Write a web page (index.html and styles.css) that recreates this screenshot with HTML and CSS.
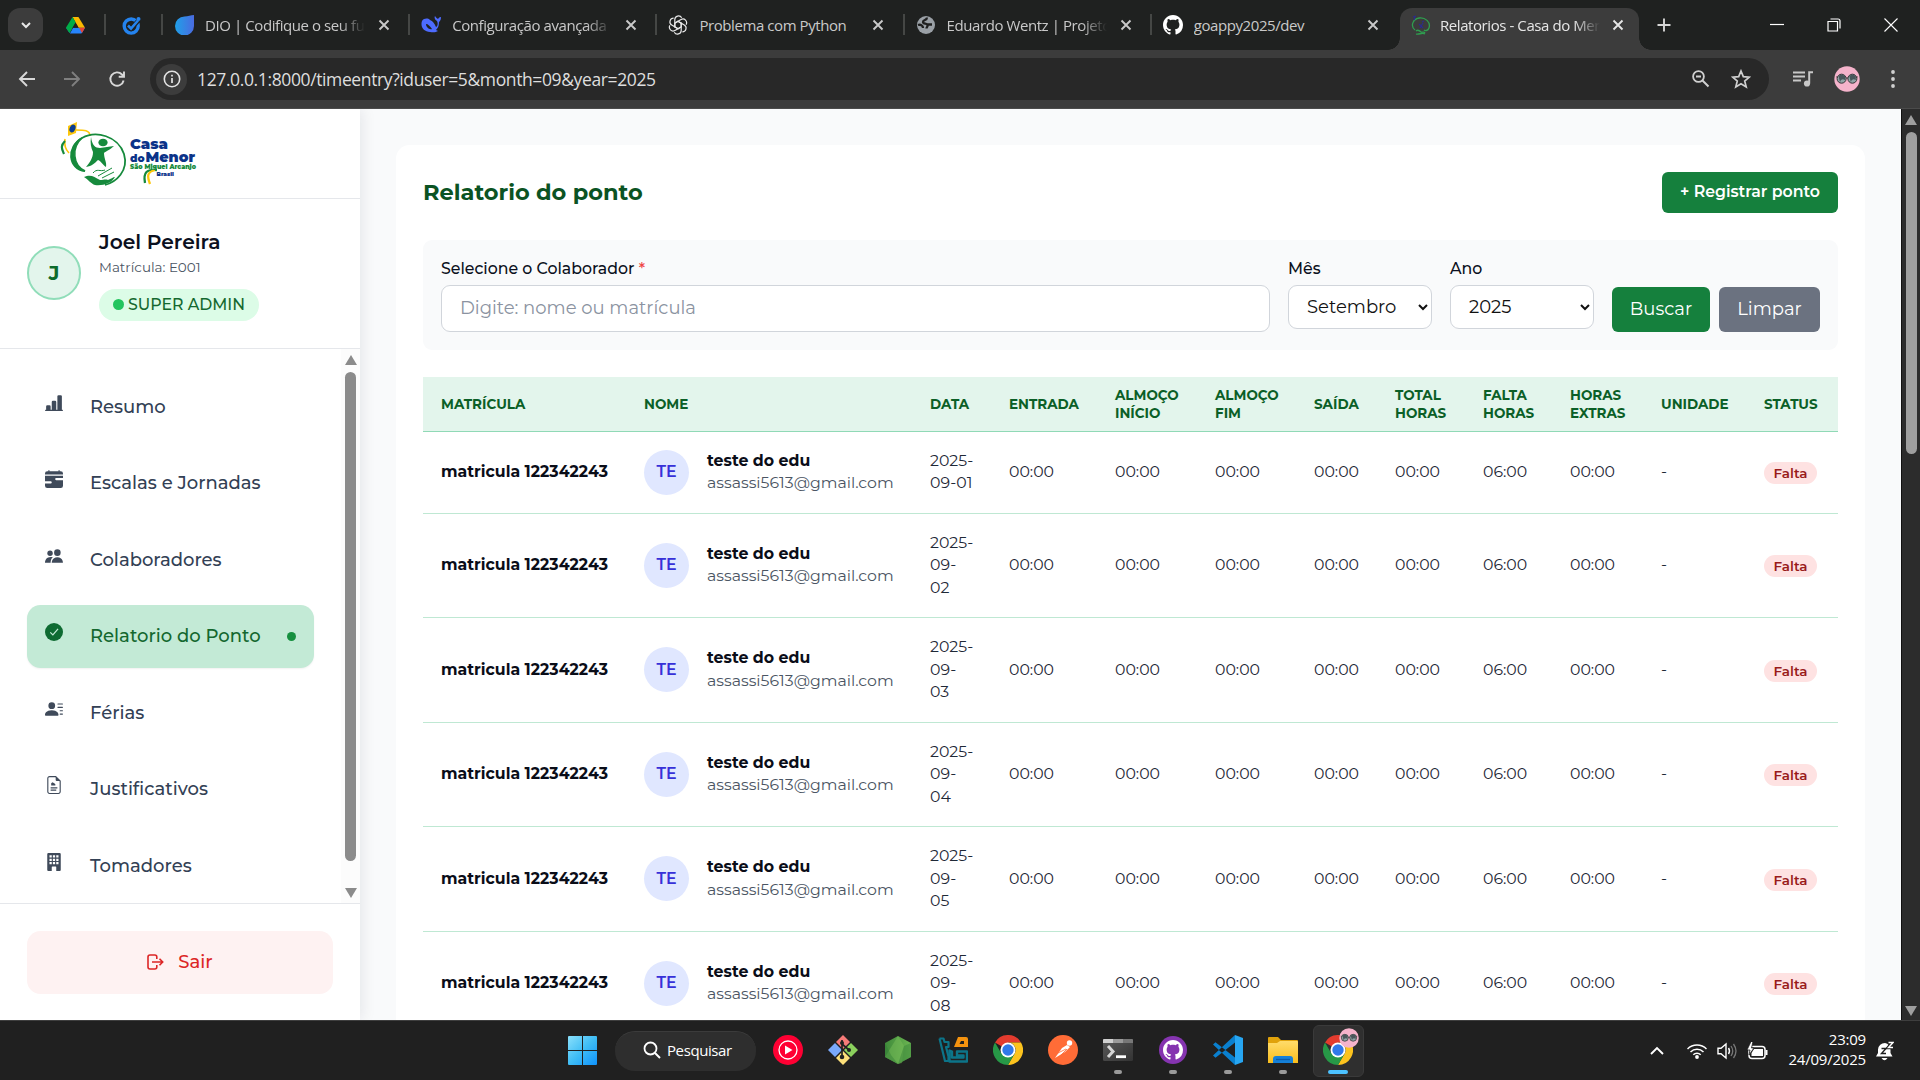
FILE: index.html
```html
<!DOCTYPE html>
<html lang="pt-BR">
<head>
<meta charset="utf-8">
<title>Relatorios - Casa do Menor</title>
<link rel="stylesheet" href="styles.css">
</head>
<body>
<svg class="defs" width="0" height="0" aria-hidden="true">
  <defs>
    <linearGradient id="gDio" x1="0" x2="1"><stop offset="0" stop-color="#1fa0e8"/><stop offset="1" stop-color="#4a6be0"/></linearGradient>
    <linearGradient id="gWin" x1="0" y1="0" x2="1" y2="1"><stop offset="0" stop-color="#8be0fb"/><stop offset=".5" stop-color="#3fbdf5"/><stop offset="1" stop-color="#0f92fb"/></linearGradient>
    <linearGradient id="gTerm" x1="0" y1="0" x2="1" y2="1"><stop offset="0" stop-color="#5a5a5a"/><stop offset="1" stop-color="#333"/></linearGradient>
    <linearGradient id="gFolder" x1="0" y1="0" x2="0" y2="1"><stop offset="0" stop-color="#ffdc6b"/><stop offset="1" stop-color="#f9bd1c"/></linearGradient>
    <linearGradient id="gNode" x1="0" x2="1"><stop offset="0" stop-color="#3f8a3a"/><stop offset="1" stop-color="#6bb552"/></linearGradient>
    <symbol id="x" viewBox="0 0 12 12"><path d="M1.500 1.500l9 9M10.500 1.500l-9 9" stroke="currentColor" stroke-width="1.900" fill="none"/></symbol>
    <symbol id="octo" viewBox="0 0 16 16"><path d="M8 0C3.58 0 0 3.58 0 8c0 3.54 2.29 6.53 5.47 7.59.4.07.55-.17.55-.38 0-.19-.01-.82-.01-1.49-2.01.37-2.53-.49-2.69-.94-.09-.23-.48-.94-.82-1.13-.28-.15-.68-.52-.01-.53.63-.01 1.08.58 1.23.82.72 1.21 1.87.87 2.33.66.07-.52.28-.87.51-1.07-1.78-.2-3.64-.89-3.64-3.95 0-.87.31-1.59.82-2.15-.08-.2-.36-1.02.08-2.12 0 0 .67-.21 2.2.82.64-.18 1.32-.27 2-.27s1.36.09 2 .27c1.53-1.04 2.2-.82 2.2-.82.44 1.1.16 1.92.08 2.12.51.56.82 1.27.82 2.15 0 3.07-1.87 3.75-3.65 3.95.29.25.54.73.54 1.48 0 1.07-.01 1.93-.01 2.2 0 .21.15.46.55.38A8.01 8.01 0 0 0 16 8c0-4.42-3.58-8-8-8" fill="currentColor"/></symbol>
    <symbol id="chrome" viewBox="0 0 30 30"><path d="M15 15L2 7.5A15 15 0 0 1 28 7.5H15z" fill="#e33b2e"/><path d="M28 7.5A15 15 0 0 1 15 30l6.5-11.2A7.5 7.5 0 0 0 15 7.500z" fill="#fcc31e"/><path d="M2 7.500A15 15 0 0 0 15 30l6.500-11.300L15 15 8.500 18.700z" fill="#279847"/><circle cx="15" cy="15" r="7.500" fill="#fff"/><circle cx="15" cy="15" r="5.700" fill="#3079ea"/></symbol>
    <symbol id="face" viewBox="0 0 26 26"><circle cx="13" cy="13" r="12.700" fill="#f5b3cb"/><g stroke="#3a3538" stroke-width="1"><circle cx="7.600" cy="12.700" r="4.500" fill="#8fa3a5"/><circle cx="18.400" cy="12.700" r="4.500" fill="#8fa3a5"/><path d="M12 12h2M3.600 11.500L2.300 10.800M22.400 11.500l1.300-.7" fill="none"/></g><path d="M4.500 10q3-3 6.500 0v4q-4-2-5 2zM15.300 10q3-3 6.500 0v4q-4-2-5 2z" fill="#4a565b"/></symbol>
  </defs>
</svg>

<header class="tabstrip">
  <button class="tab-search"><svg width="12" height="12" viewBox="0 0 12 12"><path d="M2 4l4 4 4-4" stroke="#e8e8e8" stroke-width="2" fill="none"/></svg></button>
  <div class="pinned pinned-a"><svg width="19" height="18" viewBox="0 0 87 78"><path fill="#2684fc" d="M18 78L33 52h54L73 76q-1 2-4 2z"/><path fill="#1b66d2" d="M0 52h30L16 76z"/><path fill="#fcb900" d="M30 2h27l30 50H58z"/><path fill="#00ac47" d="M30 2L44 26 16 76 1 54q-2-3 0-5z"/><path fill="#ea4335" d="M60 52h27L73 76z"/><path fill="#1f2020" d="M44 30L57 52H31z"/></svg></div>
  <div class="pinned pinned-b"><svg width="19" height="19" viewBox="0 0 19 19"><circle cx="9.200" cy="10" r="7" fill="none" stroke="#2483ee" stroke-width="3.400"/><path d="M6 9.500l3 3 7.500-8" stroke="#1f2020" stroke-width="4.500" fill="none"/><path d="M6 9.500l3 3 7-8" stroke="#2483ee" stroke-width="2.600" fill="none"/><circle cx="16.500" cy="3" r="2" fill="#2483ee"/></svg></div>

  <div class="tab sep"><svg class="fav" viewBox="0 0 20 20"><path d="M20 0v11a9.500 9.500 0 1 1-9.500-9.500C14 1.500 17 0 20 0z" fill="url(#gDio)"/></svg><span class="tab-t fade">DIO | Codifique o seu futuro</span><svg class="tab-x"><use href="#x"/></svg></div>
  <div class="tab sep"><svg class="fav" viewBox="0 0 20 20"><path d="M1 6c2-3 6-3 8-1 3 1 4 3 6 7 2-1 2-4 1-6-2-1-3-3-2-5 1 2 3 3 3 3s1-2 3-2c0 3-1 4-2 5 0 5-2 7-3 8l2 1c-3 2-6 1-8 1C3 17-1 12 1 6z" fill="#4d6bfe"/><path d="M5 9c2 0 4 2 6 5-3 1-6-2-6-5z" fill="#1f2020"/></svg><span class="tab-t fade">Configuração avançada</span><svg class="tab-x"><use href="#x"/></svg></div>
  <div class="tab sep"><svg class="fav" viewBox="0 0 20 20"><g fill="none" stroke="#e8e8e8" stroke-width="1.200"><path id="petal" d="M10 6.300L6.800 8.200V4.600a3.700 3.700 0 0 1 6.900-1.800"/><use href="#petal" transform="rotate(60 10 10)"/><use href="#petal" transform="rotate(120 10 10)"/><use href="#petal" transform="rotate(180 10 10)"/><use href="#petal" transform="rotate(240 10 10)"/><use href="#petal" transform="rotate(300 10 10)"/><path d="M10 6.300l3.200 1.900v3.700L10 13.700l-3.200-1.800V8.200z"/></g></svg><span class="tab-t">Problema com Python</span><svg class="tab-x"><use href="#x"/></svg></div>
  <div class="tab sep"><svg class="fav" viewBox="0 0 20 20"><circle cx="10" cy="10" r="9" fill="#9aa0a6"/><path d="M11 2.500c0 3-4 2-4 4.500s4 1 4.500 3-1 2-1 3.500M2 10c3-1 5 1 5 3M11 9.500h5" stroke="#1f2020" stroke-width="2.300" fill="none"/></svg><span class="tab-t fade">Eduardo Wentz | Projetos</span><svg class="tab-x"><use href="#x"/></svg></div>
  <div class="tab sep"><svg class="fav white"><use href="#octo"/></svg><span class="tab-t">goappy2025/dev</span><svg class="tab-x"><use href="#x"/></svg></div>
  <div class="tab active"><svg class="fav" viewBox="0 0 20 20"><path d="M4 15C-1 11 2 4 8 3s12 4 10 10c-1 3-4 3-5 2M5 16c2-2 4 0 5 1s3-1 4 1M5 19c3 1 6-2 9 0" stroke="#2f9e4f" stroke-width="1.300" fill="none"/><path d="M2 2l3-1M3 5l1-3M8 9l4 4m0-5l-3 5m4-7l-2 1" stroke="#2c2b8f" stroke-width="1.100" fill="none"/></svg><span class="tab-t fade">Relatorios - Casa do Menor</span><svg class="tab-x"><use href="#x"/></svg></div>
  <div class="newtab"><svg width="14" height="14" viewBox="0 0 14 14"><path d="M7 .5v13M.5 7h13" stroke="#d6d6d6" stroke-width="1.900"/></svg></div>
  <div class="winctl">
    <svg width="14" height="14" viewBox="0 0 14 14"><path d="M0 6.500h14" stroke="#fff" stroke-width="1.200"/></svg>
    <svg width="14" height="14" viewBox="0 0 14 14"><path d="M1 3.500h9.500V13H1zM3.500 1H11q2 0 2 2v7.500" stroke="#fff" stroke-width="1.200" fill="none"/></svg>
    <svg width="14" height="14" viewBox="0 0 14 14"><path d="M.5.500l13 13M13.500.500l-13 13" stroke="#fff" stroke-width="1.100"/></svg>
  </div>
</header>

<div class="toolbar">
  <div class="navbtns">
    <svg width="18" height="18" viewBox="0 0 18 18"><path d="M17 9H2M9 2L2 9l7 7" stroke="#d8d8d8" stroke-width="1.900" fill="none"/></svg>
    <svg width="18" height="18" viewBox="0 0 18 18"><path d="M1 9h15M9 2l7 7-7 7" stroke="#7f7f7f" stroke-width="1.900" fill="none"/></svg>
    <svg width="18" height="18" viewBox="0 0 18 18"><path d="M15.600 10.500A6.700 6.700 0 1 1 14 4.500L15.500 6M16 1.500v5.300h-5.300" stroke="#d8d8d8" stroke-width="1.900" fill="none"/></svg>
  </div>
  <div class="omnibox">
    <span class="site-info"><svg width="18" height="18" viewBox="0 0 18 18"><circle cx="9" cy="9" r="7.700" stroke="#e3e3e3" stroke-width="1.600" fill="none"/><path d="M9 8v5M9 4.800v1.800" stroke="#e3e3e3" stroke-width="1.700"/></svg></span>
    <span class="url">127.0.0.1:8000/timeentry?iduser=5&amp;month=09&amp;year=2025</span>
    <svg class="omni-i" viewBox="0 0 20 20"><circle cx="7.500" cy="7.500" r="5.400" stroke="#d0d0d0" stroke-width="1.800" fill="none"/><path d="M5 7.500h5M11.500 11.500l6 6" stroke="#d0d0d0" stroke-width="2"/></svg>
    <svg class="omni-i" viewBox="0 0 20 20"><path d="M10 2l2.300 5.600 6 .5-4.600 3.900 1.500 5.900L10 14.700l-5.200 3.200L6.300 12 1.700 8.100l6-.5z" stroke="#d0d0d0" stroke-width="1.700" fill="none"/></svg>
  </div>
  <div class="toolbar-right">
    <svg width="20" height="18" viewBox="0 0 20 18"><path d="M0 2.500h12M0 6.500h12M0 10.500h8" stroke="#c8c8c8" stroke-width="1.900"/><path d="M15.200 1.200H20v2h-2.800v10h-2z" fill="#c8c8c8"/><circle cx="14" cy="13.500" r="3.100" fill="#c8c8c8"/></svg>
    <svg width="26" height="26"><use href="#face"/></svg>
    <svg width="4" height="20" viewBox="0 0 4 20"><g fill="#d0d0d0"><circle cx="2" cy="3" r="1.900"/><circle cx="2" cy="10" r="1.900"/><circle cx="2" cy="17" r="1.900"/></g></svg>
  </div>
</div>

<div class="page">
  <aside class="sidebar">
    <div class="brand">
      <svg width="140" height="68" viewBox="0 0 140 68">
        <path d="M8 5l9-4-1 11-8 3z" fill="#fdc70c"/><ellipse cx="12.500" cy="7.500" rx="2.800" ry="4" fill="#0b3d91" transform="rotate(25 12.500 7.500)"/>
        <path d="M16 9c8 0 14 0 14 6M5 18c-1 6 1 11 4 14" stroke="#fdc70c" stroke-width="1.700" fill="none"/><path d="M5 20c-5 5-3 8-1 13" stroke="#168a3c" stroke-width="2.200" fill="none"/>
        <path d="M25 50C8 48 6 26 22 17c14-8 36-2 42 16 5 17-8 28-19 31" stroke="#168a3c" stroke-width="1.800" fill="none"/>
        <path d="M22 17C7 26 8 47 25 50 13 44 11 27 22 17z" fill="#168a3c" stroke="#168a3c" stroke-width="1.500"/>
        <ellipse cx="43" cy="21.500" rx="4.600" ry="3.800" fill="#168a3c"/>
        <path d="M31 16c1 8 4 11 9 11l14-2c-4 4-8 5-10 7 0 6 3 9 2 14-3-2-5-6-8-7-3 3-6 6-12 7 4-5 7-9 7-15-2-4-3-9-2-15z" fill="#168a3c"/>
        <path d="M24 56c7-3 10 0 16 3 4 0 5-1 8 0 3-1 5-3 7-3-3 6-12 9-20 8-4-1-7-6-11-8z" fill="#168a3c"/>
        <path d="M33 52c4-5 7-1 12-3M38 55l14-8M42 57l12-6" stroke="#168a3c" stroke-width="1" fill="none"/>
        <path d="M97 49c-10-1-14 2-12 13" stroke="#168a3c" stroke-width="2.300" fill="none"/><path d="M95 49c-8 2-8 6-5 14" stroke="#fdc70c" stroke-width="2.300" fill="none"/>
        <text class="lg blue" x="70" y="28" font-size="14.500" textLength="38" lengthAdjust="spacingAndGlyphs">Casa</text>
        <text class="lg blue" x="70" y="40.500" font-size="11" textLength="14.500" lengthAdjust="spacingAndGlyphs">do</text>
        <text class="lg blue" x="85.500" y="40.500" font-size="14.500" textLength="49.500" lengthAdjust="spacingAndGlyphs">Menor</text>
        <text class="lg green" x="70" y="47.500" font-size="6.300" textLength="66" lengthAdjust="spacingAndGlyphs">São Miguel Arcanjo</text>
        <text class="lg blue" x="96.500" y="55" font-size="6" textLength="17.500" lengthAdjust="spacingAndGlyphs">Brasil</text>
      </svg>
    </div>
    <div class="user">
      <div class="user-avatar">J</div>
      <div class="user-info">
        <div class="user-name">Joel Pereira</div>
        <div class="user-id">Matrícula: E001</div>
        <div class="role"><i></i><span>SUPER ADMIN</span></div>
      </div>
    </div>
    <div class="navwrap">
      <nav class="nav">
        <a class="item"><svg viewBox="0 0 16 16"><path d="M11 2a1 1 0 0 1 1-1h2a1 1 0 0 1 1 1v12h.5a.5.500 0 0 1 0 1H.5a.5.500 0 0 1 0-1H1v-3a1 1 0 0 1 1-1h2a1 1 0 0 1 1 1v3h1V7a1 1 0 0 1 1-1h2a1 1 0 0 1 1 1v7h1z"/></svg><span>Resumo</span></a>
        <a class="item"><svg viewBox="0 0 16 16"><path d="M4 .5a.5.500 0 0 0-1 0V1H2a2 2 0 0 0-2 2v1h16V3a2 2 0 0 0-2-2h-1V.5a.5.500 0 0 0-1 0V1H4zM16 7V5H0v5h5a1 1 0 1 1 0 2H0v2a2 2 0 0 0 2 2h12a2 2 0 0 0 2-2V9h-6a1 1 0 1 1 0-2z"/></svg><span>Escalas e Jornadas</span></a>
        <a class="item"><svg viewBox="0 0 16 16"><circle cx="11" cy="5" r="2.900"/><circle cx="4.500" cy="5.500" r="2.400"/><path d="M6 14s0-5 5-5 5 5 5 5zM5 14c0-2 .5-4 2-5-5-1-7 2-7 5z"/></svg><span>Colaboradores</span></a>
        <a class="item current"><svg viewBox="0 0 16 16"><circle cx="8" cy="8" r="8"/><path d="M4.700 8.300l2.300 2.300 4.600-5.300" stroke="#c3ead6" stroke-width="1.100" fill="none"/></svg><span>Relatorio do Ponto</span><i></i></a>
        <a class="item"><svg viewBox="0 0 16 16"><path d="M6 8a3 3 0 1 0 0-6 3 3 0 0 0 0 6m-5 6s-1 0-1-1 1-4 6-4 6 3 6 4-1 1-1 1zM11 3.500a.5.500 0 0 1 .5-.5h4a.5.500 0 0 1 0 1h-4a.5.500 0 0 1-.5-.5m.5 2.500a.5.500 0 0 0 0 1h4a.5.500 0 0 0 0-1zm2 3a.5.500 0 0 0 0 1h2a.5.500 0 0 0 0-1zm0 3a.5.500 0 0 0 0 1h2a.5.500 0 0 0 0-1z"/></svg><span>Férias</span></a>
        <a class="item"><svg viewBox="0 0 16 16"><path d="M9.500.5H4a1.500 1.500 0 0 0-1.500 1.500v12A1.500 1.500 0 0 0 4 15.500h8a1.500 1.500 0 0 0 1.500-1.500V4.500zM5 10.500h6M5 12.500h5" fill="none" stroke="currentColor"/><path d="M9.500.5v3q0 1 1 1h3zM5.500 8.500V6.500l1.200-.9L8.200 6.500l1 .8v1.200z"/></svg><span>Justificativos</span></a>
        <a class="item"><svg viewBox="0 0 16 16"><path d="M3 0a1 1 0 0 0-1 1v14a1 1 0 0 0 1 1h3v-3.500a.5.500 0 0 1 .5-.5h3a.5.500 0 0 1 .5.500V16h3a1 1 0 0 0 1-1V1a1 1 0 0 0-1-1z"/><path fill="#fff" d="M4 2h2v2H4zm3 0h2v2H7zm3 0h2v2h-2zM4 5h2v2H4zm3 0h2v2H7zm3 0h2v2h-2zM4 8h2v2H4zm3 0h2v2H7zm3 0h2v2h-2z"/></svg><span>Tomadores</span></a>
      </nav>
      <div class="sbar light"><i class="up"></i><b></b><i class="down"></i></div>
    </div>
    <div class="logout-wrap">
      <button class="logout"><svg width="17" height="16" viewBox="0 0 17 16"><path d="M9.800 5V3Q9.800 1 7.800 1H3Q1 1 1 3v10q0 2 2 2h4.800q2 0 2-2v-2M5 8h10.500M12.500 4.800L15.700 8l-3.200 3.200" stroke="#dc2626" stroke-width="1.600" fill="none"/></svg><span>Sair</span></button>
    </div>
  </aside>

  <main class="main">
    <section class="card">
      <div class="card-head"><h1>Relatorio do ponto</h1><button class="btn-new">+ Registrar ponto</button></div>
      <form class="filters">
        <label class="field grow"><span>Selecione o Colaborador <em>*</em></span><input type="text" placeholder="Digite: nome ou matrícula"></label>
        <label class="field"><span>Mês</span><select><option>Setembro</option></select></label>
        <label class="field"><span>Ano</span><select><option>2025</option></select></label>
        <div class="actions"><button type="button" class="btn green-btn">Buscar</button><button type="button" class="btn gray-btn">Limpar</button></div>
      </form>
      <table class="report">
        <colgroup><col class="c-mat"><col class="c-nome"><col class="c-data"><col class="c-ent"><col class="c-ini"><col class="c-fim"><col class="c-sai"><col class="c-tot"><col class="c-fal"><col class="c-ext"><col class="c-uni"><col class="c-sta"></colgroup>
        <thead><tr><th>MATRÍCULA</th><th>NOME</th><th>DATA</th><th>ENTRADA</th><th>ALMOÇO<br>INÍCIO</th><th>ALMOÇO<br>FIM</th><th>SAÍDA</th><th>TOTAL<br>HORAS</th><th>FALTA<br>HORAS</th><th>HORAS<br>EXTRAS</th><th>UNIDADE</th><th>STATUS</th></tr></thead>
        <tbody>
          <tr><td class="mat">matricula 122342243</td><td><div class="person"><span class="ini">TE</span><div><strong>teste do edu</strong><small>assassi5613@gmail.com</small></div></div></td><td>2025-<br>09-01</td><td>00:00</td><td>00:00</td><td>00:00</td><td>00:00</td><td>00:00</td><td>06:00</td><td>00:00</td><td>-</td><td><span class="pill">Falta</span></td></tr>
          <tr><td class="mat">matricula 122342243</td><td><div class="person"><span class="ini">TE</span><div><strong>teste do edu</strong><small>assassi5613@gmail.com</small></div></div></td><td>2025-<br>09-<br>02</td><td>00:00</td><td>00:00</td><td>00:00</td><td>00:00</td><td>00:00</td><td>06:00</td><td>00:00</td><td>-</td><td><span class="pill">Falta</span></td></tr>
          <tr><td class="mat">matricula 122342243</td><td><div class="person"><span class="ini">TE</span><div><strong>teste do edu</strong><small>assassi5613@gmail.com</small></div></div></td><td>2025-<br>09-<br>03</td><td>00:00</td><td>00:00</td><td>00:00</td><td>00:00</td><td>00:00</td><td>06:00</td><td>00:00</td><td>-</td><td><span class="pill">Falta</span></td></tr>
          <tr><td class="mat">matricula 122342243</td><td><div class="person"><span class="ini">TE</span><div><strong>teste do edu</strong><small>assassi5613@gmail.com</small></div></div></td><td>2025-<br>09-<br>04</td><td>00:00</td><td>00:00</td><td>00:00</td><td>00:00</td><td>00:00</td><td>06:00</td><td>00:00</td><td>-</td><td><span class="pill">Falta</span></td></tr>
          <tr><td class="mat">matricula 122342243</td><td><div class="person"><span class="ini">TE</span><div><strong>teste do edu</strong><small>assassi5613@gmail.com</small></div></div></td><td>2025-<br>09-<br>05</td><td>00:00</td><td>00:00</td><td>00:00</td><td>00:00</td><td>00:00</td><td>06:00</td><td>00:00</td><td>-</td><td><span class="pill">Falta</span></td></tr>
          <tr><td class="mat">matricula 122342243</td><td><div class="person"><span class="ini">TE</span><div><strong>teste do edu</strong><small>assassi5613@gmail.com</small></div></div></td><td>2025-<br>09-<br>08</td><td>00:00</td><td>00:00</td><td>00:00</td><td>00:00</td><td>00:00</td><td>06:00</td><td>00:00</td><td>-</td><td><span class="pill">Falta</span></td></tr>
        </tbody>
      </table>
    </section>
  </main>
  <div class="sbar dark"><i class="up"></i><b></b><i class="down"></i></div>
</div>

<footer class="taskbar">
  <div class="tb-main">
    <svg width="29" height="29" viewBox="0 0 29 29"><path d="M0 1q0-1 1-1h13v14H0zM15 0h13q1 0 1 1v13H15zM0 15h14v14H1q-1 0-1-1zM15 15h14v13q0 1-1 1H15z" fill="url(#gWin)"/></svg>
    <div class="tb-search"><svg width="18" height="18" viewBox="0 0 18 18"><circle cx="7.500" cy="7.500" r="6" stroke="#fff" stroke-width="1.800" fill="none"/><path d="M12 12l5 5" stroke="#fff" stroke-width="2"/></svg><span>Pesquisar</span></div>
    <div class="slot"><svg viewBox="0 0 30 30"><circle cx="15" cy="15" r="15" fill="#ff0033"/><circle cx="15" cy="15" r="9" fill="none" stroke="#fff" stroke-width="1.300"/><path d="M12 10.500l7.500 4.500-7.500 4.500z" fill="#fff"/></svg></div>
    <div class="slot"><svg viewBox="0 0 30 30"><path d="M15 0l7 7-7 7-7-7z" fill="#f77b78"/><path d="M23 8l7 7-7 7-7-7z" fill="#8bd15d"/><path d="M7 8l7 7-7 7-7-7z" fill="#7aa9fb"/><path d="M15 16l7 7-7 7-7-7z" fill="#fde07a"/><path d="M14 5v17M14 9l7 6" stroke="#222" stroke-width="1.700" fill="none"/><circle cx="14" cy="8" r="2" fill="#222"/><circle cx="21" cy="15" r="2" fill="#222"/><circle cx="14" cy="22" r="2.300" fill="#222"/></svg></div>
    <div class="slot"><svg viewBox="0 0 30 30"><path d="M15 1l13 7v14l-13 7-13-7V8z" fill="url(#gNode)"/><path d="M15 1l6 10-2 17-4 1-13-7z" fill="#7cc05a" opacity=".45"/><path d="M2 8l6 12 7 9-13-7zM28 8l-7 3-6 18 13-7z" fill="#2f7a34" opacity=".4"/></svg></div>
    <div class="slot"><svg viewBox="0 0 30 30"><path d="M1.500 3.500h4l1 3.500h4v5H8l2.500 9.500V26H7L1.500 3.500" stroke="#0c7489" stroke-width="2.200" fill="none" stroke-linejoin="round"/><path d="M29 16.500H19v4h6.500v2H14v-6l-2.500-1v11h17.500v-10z" fill="none" stroke="#0c7489" stroke-width="2.400" stroke-linejoin="round"/><path d="M16 12l4-10h8q2 0 2 2v8zm7-6l-1.500 3H26V6z" fill="#f5930f" fill-rule="evenodd"/></svg></div>
    <div class="slot"><svg><use href="#chrome"/></svg></div>
    <div class="slot"><svg viewBox="0 0 30 30"><circle cx="15" cy="15" r="15" fill="#ff6c37"/><circle cx="21.500" cy="8" r="2.700" fill="#fff"/><path d="M7 23l7-10 5-3 3 2-5 5z" fill="#fff"/><path d="M10 18l8-4M13 20l6-6" stroke="#ff6c37" stroke-width=".8"/></svg></div>
    <div class="slot run"><svg viewBox="0 0 30 30"><rect y="4" width="30" height="22" rx="1.500" fill="url(#gTerm)"/><path d="M0 8V5q0-1 1-1h9v4z" fill="#d0d0d0"/><path d="M10 4h10v4H10z" fill="#9a9a9a"/><path d="M20 4h9q1 0 1 1v3H20z" fill="#777"/><path d="M5 11l5 5.500L5 22" stroke="#d6d6d6" stroke-width="3" fill="none"/><path d="M13 21.700h10" stroke="#fff" stroke-width="2.800"/></svg></div>
    <div class="slot run"><svg viewBox="0 0 30 30"><circle cx="15" cy="15" r="14" fill="#8534b0"/><g color="#fff"><use href="#octo" x="5" y="5" width="20" height="20"/></g></svg></div>
    <div class="slot run"><svg viewBox="0 0 30 30"><path d="M0 9.500l2.500-2.300L22 22.500V30zM0 20.500l2.500 2.300L22 7.500V0z" fill="#0a80cf"/><path d="M22 0l8 3v24l-8 3z" fill="#27a6f2"/></svg></div>
    <div class="slot run"><svg viewBox="0 0 30 30"><path d="M0 3q0-1 1-1h9l3 3h16q1 0 1 1v6H0z" fill="#e0a20b"/><path d="M0 8h9l3-2h17q1 0 1 1v21H0z" fill="url(#gFolder)"/><path d="M5 28v-4q0-3 3-3h14q3 0 3 3v4z" fill="#1580d8"/><path d="M8 24.500h14" stroke="#0b5bab" stroke-width="1.300"/></svg></div>
    <div class="slot active-app"><svg><use href="#chrome"/></svg><svg class="mini"><use href="#face"/></svg></div>
  </div>
  <div class="tray">
    <svg width="14" height="9" viewBox="0 0 14 9"><path d="M1 8l6-6 6 6" stroke="#fff" stroke-width="1.900" fill="none"/></svg>
    <svg width="20" height="16" viewBox="0 0 20 16"><g stroke="#fff" stroke-width="1.500" fill="none"><path d="M.5 6a13.500 13.500 0 0 1 19 0M3.500 9a9.300 9.300 0 0 1 13 0M6.300 11.700a5.300 5.300 0 0 1 7.400 0"/></g><circle cx="10" cy="14" r="1.900" fill="#fff"/></svg>
    <svg width="20" height="18" viewBox="0 0 20 18"><path d="M1 6.200h3L9 2v14l-5-4.200H1z" stroke="#fff" stroke-width="1.400" fill="none"/><path d="M11.500 6q2 3 0 6" stroke="#fff" stroke-width="1.400" fill="none"/><path d="M14 4q3.500 5 0 10M16.500 2q5 7 0 14" stroke="#777" stroke-width="1.300" fill="none"/></svg>
    <svg width="21" height="18" viewBox="0 0 21 18"><rect x="2" y="4.500" width="16" height="12" rx="3" stroke="#fff" stroke-width="1.500" fill="none"/><path d="M7 7h9v7H4.500v-3zM18.500 8h2v5h-2z" fill="#fff"/><path d="M4-.5L0 8h3l-1 5 5-7H4.500L6-.5z" fill="#fff" stroke="#202020" stroke-width=".8"/></svg>
    <div class="clock">23:09<br>24/09/2025</div>
    <svg class="bell" width="18" height="20" viewBox="0 0 18 20"><path d="M0 15.500l2-3.500V8.500Q3 2 9 2q5 1 5.500 6.500V12l2 3.500zM5.500 17h6q-3 4.500-6 0z" fill="#fff"/><path d="M5.500 7.500h4.500L5.500 12.500H10M12 1.500h4.500L12 6.500h4.500" stroke="#202020" stroke-width="1.400" fill="none"/><path d="M12.500 1h4.500L12.500 6.500H17" stroke="#202020" stroke-width="3.600" fill="none"/><path d="M12.500 1.500h4.500L12.500 6.500H17" stroke="#fff" stroke-width="1.400" fill="none"/></svg>
  </div>
</footer>
</body>
</html>
```
FILE: styles.css
```css
* { box-sizing: border-box; }
html { font-size: 18px; }
body { margin: 0; width: 1920px; height: 1080px; overflow: hidden; display: flex; flex-direction: column; font-family: Montserrat, Inter, sans-serif; color: #0b1020; background: #202020; }
button, input, select { font: inherit; }
.defs { position: absolute; }

/* browser window */
.tabstrip, .toolbar, .taskbar { font-family: "Segoe UI", "Open Sans", sans-serif; flex: none; }
.tabstrip { height: 50px; background: #1f2120; display: flex; align-items: stretch; padding-left: 8px; }
.tab-search { width: 35px; height: 34px; margin-top: 8px; border: 0; border-radius: 12px; background: #3c3c3c; padding: 0; display: grid; place-items: center; }
.pinned { display: flex; align-items: center; }
.pinned-a { width: 61px; padding-left: 23px; }
.pinned-b { width: 57px; padding-left: 18px; background: linear-gradient(#454745, #454745) no-repeat 0 14px / 2px 21px; }
.tab { width: 247.200px; display: flex; align-items: center; padding-left: 13px; flex: none; color: #c9c9c9; }
.sep { background: linear-gradient(#454745, #454745) no-repeat 0 14px / 2px 21px; }
.fav { width: 20px; height: 20px; flex: none; }
.white { color: #fff; }
.tab-t { margin-left: 11px; width: 160px; font-size: 15px; letter-spacing: -.42px; white-space: nowrap; overflow: hidden; }
.fade { -webkit-mask-image: linear-gradient(90deg, #000 84%, transparent); mask-image: linear-gradient(90deg, #000 84%, transparent); }
.tab-x { width: 12px; height: 12px; margin-left: 13px; }
.active { width: 239px; margin: 8px 0 0 3px; padding: 0 0 8px 11px; background: #3c3c3c; border-radius: 12px 12px 0 0; color: #e6e6e6; position: relative; }
.active::before, .active::after { content: ""; position: absolute; bottom: 0; width: 12px; height: 12px; }
.active::before { left: -12px; background: radial-gradient(circle at 0 0, transparent 11.500px, #3c3c3c 12px); }
.active::after { right: -12px; background: radial-gradient(circle at 100% 0, transparent 11.500px, #3c3c3c 12px); }
.active .tab-t { margin-left: 9px; }
.active .tab-x { margin-left: 12px; }
.newtab { width: 50px; display: grid; place-items: center; }
.winctl { margin-left: auto; display: flex; align-items: center; gap: 43px; padding-right: 22px; }
.toolbar { height: 59px; background: #3c3c3c; display: flex; align-items: center; border-bottom: 1px solid #4b4b4b; }
.navbtns { width: 150px; display: flex; gap: 27px; padding-left: 18px; }
.omnibox { width: 1619px; height: 42px; border-radius: 21px; background: #282828; display: flex; align-items: center; padding: 0 18px 0 6px; }
.site-info { width: 31px; height: 31px; border-radius: 50%; background: #3c3c3c; display: grid; place-items: center; }
.url { flex: 1; margin-left: 10px; font-size: 17.500px; letter-spacing: -.38px; color: #dedede; }
.omni-i { width: 20px; height: 20px; margin-left: 20px; }
.toolbar-right { flex: 1; display: flex; align-items: center; gap: 31px; padding-left: 24px; }
.toolbar-right svg:nth-child(2) { margin-left: -10px; }

/* application */
.page { height: 911px; display: flex; background: #f9fafb; overflow: hidden; }
.sidebar { width: 360px; flex: none; display: flex; flex-direction: column; background: #fff; box-shadow: 2px 0 14px rgba(15, 23, 42, .09); position: relative; }
.brand { height: 90px; border-bottom: 1px solid #e5e7eb; padding: 12px 0 0 60px; }
.lg { font-family: Montserrat, Inter, sans-serif; font-weight: 900; }
.blue { fill: #0b3389; }
.green { fill: #168a3c; }
.user { height: 150px; border-bottom: 1px solid #e5e7eb; padding: 26px 27px; display: flex; align-items: center; gap: 18px; }
.user-avatar { width: 54px; height: 54px; border-radius: 50%; border: 2px solid #90ddb9; background: #e3f5ec; color: #0d6b2b; font-weight: 700; font-size: 1.125rem; display: grid; place-items: center; margin-top: -2px; }
.user-name { font-size: 20.250px; font-weight: 600; line-height: 30px; }
.user-id { font-size: 13.500px; font-weight: 400; line-height: 18px; color: #4b5563; margin: 1px 0 13px; }
.role { height: 32px; width: 160px; border-radius: 16px; background: #dcfce7; color: #14682f; font-size: 15.750px; font-weight: 500; display: flex; align-items: center; padding-left: 14px; gap: 4px; white-space: nowrap; }
.role i { width: 11px; height: 11px; border-radius: 50%; background: #22c55e; }
.navwrap { flex: 1; min-height: 0; display: flex; overflow: hidden; }
.nav { flex: 1; padding: 26px 27px; display: flex; flex-direction: column; gap: 13.500px; }
.item { height: 63px; flex: none; display: flex; align-items: center; padding: 0 18px; border-radius: 13.500px; color: #334155; font-weight: 500; font-size: 18px; }
.item svg { width: 18px; height: 18px; fill: #3f4a5a; color: #3f4a5a; margin: -8px 27px 0 0; }
.current { background: #c3ead6; color: #14682f; box-shadow: 0 1px 2px rgba(0, 0, 0, .06); }
.current svg { fill: #0e6b32; }
.current i { width: 9px; height: 9px; border-radius: 50%; background: #15903f; margin-left: auto; }
.sbar { width: 19px; flex: none; display: flex; flex-direction: column; align-items: center; }
.sbar i { border: 6px solid transparent; }
.sbar b { width: 11px; border-radius: 6px; }
.light { background: #fcfcfc; }
.light .up { border-bottom: 10px solid #8b8b8b; border-top: 0; margin-top: 6px; }
.light .down { border-top: 10px solid #8b8b8b; border-bottom: 0; margin: auto 0 5px; }
.light b { background: #8b8b8b; height: 489px; margin-top: 7px; }
.dark { background: #2c2c2c; border-left: 1px solid #111; }
.dark .up { border-bottom: 10px solid #9f9f9f; border-top: 0; margin-top: 6px; }
.dark .down { border-top: 10px solid #9f9f9f; border-bottom: 0; margin: auto 0 4px; }
.dark b { background: #9f9f9f; height: 322px; margin-top: 7px; }
.logout-wrap { height: 117px; border-top: 1px solid #e5e7eb; padding: 27px; }
.logout { width: 100%; height: 63px; border: 0; border-radius: 13.500px; background: #fef2f2; color: #dc2626; font-weight: 500; display: flex; align-items: center; justify-content: center; gap: 14px; padding-bottom: 3px; }
.main { flex: 1; padding: 36px; min-width: 0; }
.card { background: #fff; border-radius: 13.500px 13.500px 0 0; padding: 27px; height: 1000px; }
.card-head { height: 40.500px; display: flex; justify-content: space-between; align-items: center; }
h1 { margin: 0; font-size: 22.500px; font-weight: 700; color: #0b5323; }
.btn-new { height: 40.500px; width: 176px; padding: 0 0 2px; border: 0; border-radius: 6px; background: #15803d; color: #fff; font-weight: 600; font-size: 15.750px; white-space: nowrap; }
.filters { margin: 27px 0; height: 110px; background: #f9fafb; border-radius: 9px; padding: 17px 18px; display: flex; gap: 18px; font-size: 18px; }
.field { width: 144px; }
.field.grow { flex: 1; }
.field > span { display: block; font-size: 15.750px; font-weight: 500; line-height: 24px; margin-bottom: 4px; white-space: nowrap; }
.field em { color: #ef4444; font-style: normal; }
.field input { display: block; width: 100%; height: 47px; border: 1px solid #d1d5db; border-radius: 9px; padding: 0 18px; background: #fff; }
.field input::placeholder { color: #8b93a1; opacity: 1; }
.field select { display: block; width: 100%; height: 44px; border: 1px solid #d1d5db; border-radius: 9px; padding: 0 0 0 14px; background: #fff; color: #111; }
.actions { display: flex; gap: 9px; padding-top: 30px; }
.btn { height: 45px; border: 0; border-radius: 6px; color: #fff; padding: 0; }
.green-btn { width: 98px; background: #15803d; }
.gray-btn { width: 101px; background: #6b7280; }

.report { width: 1415px; border-collapse: separate; border-spacing: 0; table-layout: fixed; font-size: 15.750px; line-height: 22.500px; }
.c-mat { width: 203px; }
.c-nome { width: 286px; }
.c-data { width: 79px; }
.c-ent { width: 106px; }
.c-ini { width: 100px; }
.c-fim { width: 99px; }
.c-sai { width: 81px; }
.c-tot { width: 88px; }
.c-fal { width: 87px; }
.c-ext { width: 91px; }
.c-uni { width: 103px; }
.c-sta { width: 92px; }
.report th { height: 55px; padding: 0 0 0 18px; background: #e3f5ec; color: #0b5f27; font-size: 13.500px; line-height: 18px; font-weight: 700; text-align: left; white-space: nowrap; border-bottom: 1px solid #90d9b6; }
.report td { padding: 18px 0 18px 18px; border-bottom: 1px solid #bfe8d3; white-space: nowrap; font-weight: 400; color: #1f2937; }
.report .mat { font-weight: 700; color: #0a0d18; }
.person { display: flex; align-items: center; gap: 18px; }
.ini { width: 45px; height: 45px; border-radius: 50%; background: #e0e7ff; color: #3730d8; font-weight: 600; display: grid; place-items: center; }
.person strong { display: block; color: #0a0d18; font-weight: 700; }
.person small { display: block; font-size: 15.750px; color: #4b5563; }
.pill { display: block; width: 53px; height: 22px; margin-top: 2px; border-radius: 11px; background: #fee2e2; color: #991b1b; font-size: 13.500px; line-height: 22px; font-weight: 600; text-align: center; }

/* system taskbar */
.taskbar { height: 60px; background: #202020; border-top: 1px solid #3e3e3e; display: flex; justify-content: space-between; color: #fff; font-size: 15px; letter-spacing: -.4px; }
.tb-main { display: flex; align-items: center; padding-left: 568px; }
.tb-search { width: 141px; height: 40px; margin: 0 4px 0 18px; border-radius: 20px; background: #2e2e2e; border-top: 1px solid #3b3b3b; display: flex; align-items: center; gap: 6px; padding: 0 0 2px 28px; }
.slot { width: 55px; height: 59px; display: grid; place-items: center; position: relative; }
.slot svg { width: 30px; height: 30px; margin-top: -1px; }
.run::after, .active-app::after { content: ""; position: absolute; bottom: 6px; left: 23.500px; width: 8px; height: 4px; border-radius: 2px; background: #9a9a9a; }
.active-app::before { content: ""; position: absolute; left: 3px; top: 4px; width: 49px; height: 50px; border-radius: 6px; background: #2f2f2f; border: 1px solid #3a3a3a; }
.active-app svg { position: relative; }
.active-app .mini { position: absolute; width: 20px; height: 20px; left: 29px; top: 8px; }
.active-app::after { width: 20px; left: 18px; background: #4cc2ff; }
.tray { display: flex; align-items: center; padding-right: 26px; gap: 10px; }
.tray svg:first-child { margin-right: 13px; }
.clock { margin: -3px 0 0 10px; width: 78px; text-align: right; line-height: 20px; letter-spacing: -.2px; }
```
